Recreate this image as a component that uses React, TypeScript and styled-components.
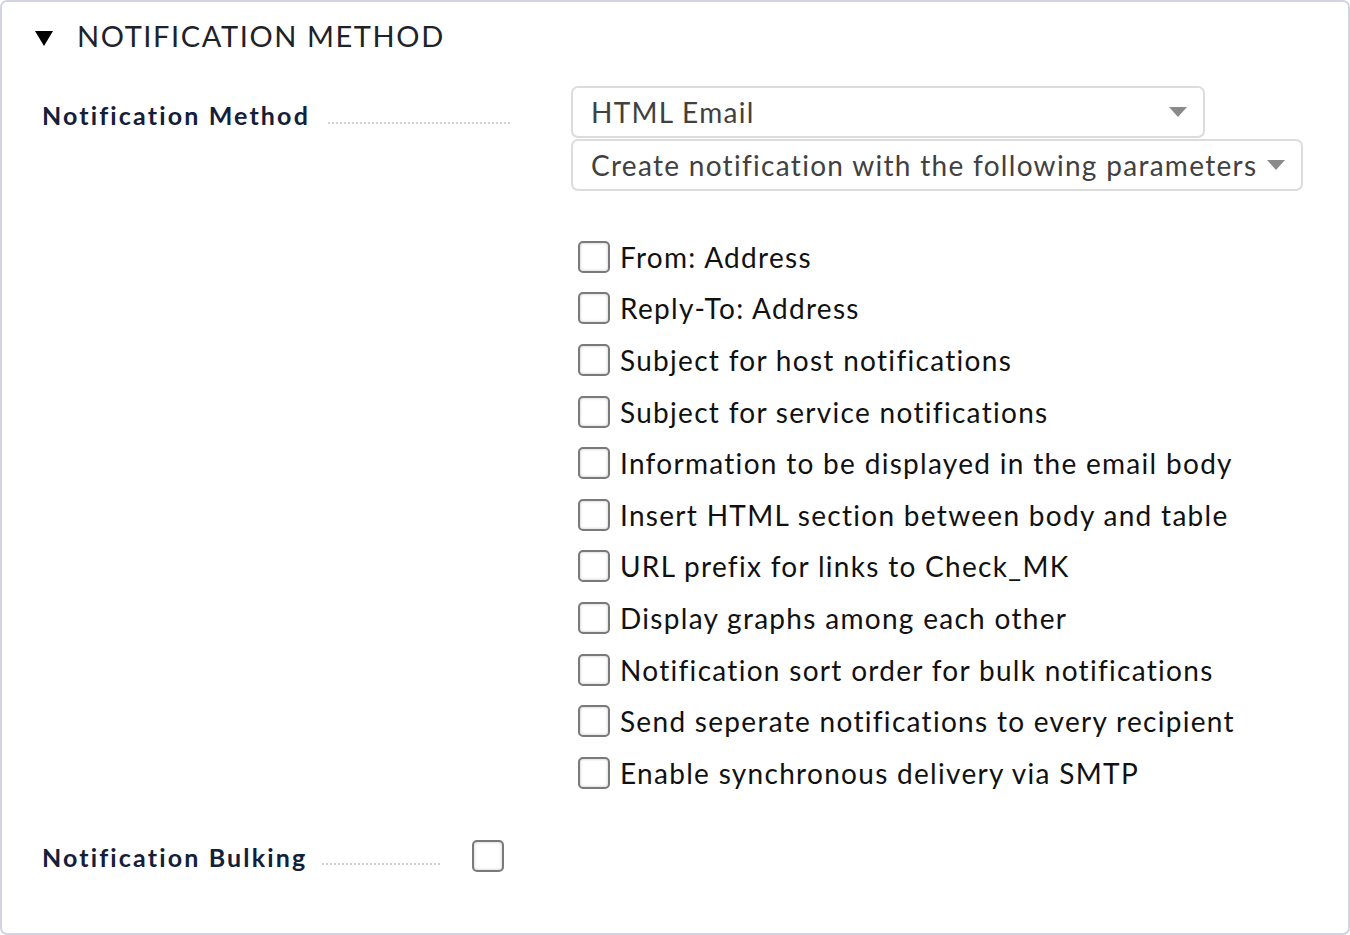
import React from 'react'
import styled, { createGlobalStyle } from 'styled-components'

const GlobalStyle = createGlobalStyle`
  html, body {
    margin: 0;
    padding: 0;
    background: #ffffff;
  }
  body {
    font-family: Lato, 'Open Sans', sans-serif;
  }
`

const Panel = styled.div`
  box-sizing: border-box;
  width: 1350px;
  height: 935px;
  border: 2px solid #d2d4e2;
  border-radius: 7px;
  padding: 15px 0 0 0;
`

const Header = styled.div`
  display: flex;
  align-items: center;
  gap: 24px;
  padding-left: 33px;
  height: 36px;
`

const Triangle = styled.span`
  width: 0;
  height: 0;
  border-left: 9px solid transparent;
  border-right: 9px solid transparent;
  border-top: 15px solid #000;
  margin-top: 6px;
`

const Title = styled.h2`
  margin: 0;
  font-weight: 400;
  font-size: 29px;
  letter-spacing: 1.6px;
  color: #1e2229;
`

const Row = styled.div<{ $gap: number; $top: number }>`
  display: flex;
  align-items: flex-start;
  padding-left: 40px;
  margin-top: ${(p) => p.$top}px;
  gap: ${(p) => p.$gap}px;
`

const Legend = styled.div<{ $height: number; $gap: number; $shift: number }>`
  display: flex;
  align-items: center;
  height: ${(p) => p.$height}px;
  padding-top: ${(p) => p.$shift}px;
  gap: ${(p) => p.$gap}px;
`

const LegendText = styled.span`
  font-weight: 700;
  font-size: 25px;
  letter-spacing: 2.15px;
  color: #13203a;
`

const Dots = styled.span<{ $width: number }>`
  width: ${(p) => p.$width}px;
  height: 2px;
  margin-top: 15px;
  background-image: radial-gradient(circle, #cfcfd6 0.9px, transparent 1.2px);
  background-size: 4px 2px;
  background-repeat: repeat-x;
`

const Value = styled.div`
  display: flex;
  flex-direction: column;
  align-items: flex-start;
`

const Select = styled.div<{ $width: number }>`
  box-sizing: border-box;
  display: flex;
  align-items: center;
  justify-content: space-between;
  width: ${(p) => p.$width}px;
  height: 52px;
  padding: 0 16px 0 18px;
  border: 2px solid #dcdcdc;
  border-radius: 7px;
  background: #fff;
  font-size: 28px;
  letter-spacing: 1.3px;
  color: #414141;
  & + & {
    margin-top: 1px;
  }
`

const Caret = styled.span`
  width: 0;
  height: 0;
  border-left: 9px solid transparent;
  border-right: 9px solid transparent;
  border-top: 10px solid #8a8a8a;
`

const Checklist = styled.div`
  display: flex;
  flex-direction: column;
  margin-top: 40px;
  padding-left: 7px;
`

const CheckRow = styled.label`
  display: flex;
  align-items: center;
  gap: 10px;
  height: 51.6px;
  font-size: 28px;
  letter-spacing: 1.3px;
  color: #111;
`

const Box = styled.span`
  box-sizing: border-box;
  display: inline-block;
  width: 32px;
  height: 32px;
  border: 2px solid #7a7a7a;
  border-radius: 5px;
  background: #fff;
  box-shadow: inset 0 0 3px rgba(0, 0, 0, 0.25);
  flex-shrink: 0;
`

const options = [
  'From: Address',
  'Reply-To: Address',
  'Subject for host notifications',
  'Subject for service notifications',
  'Information to be displayed in the email body',
  'Insert HTML section between body and table',
  'URL prefix for links to Check_MK',
  'Display graphs among each other',
  'Notification sort order for bulk notifications',
  'Send seperate notifications to every recipient',
  'Enable synchronous delivery via SMTP',
]

const App: React.FC = () => {
  return (
    <>
      <GlobalStyle />
      <Panel>
        <Header>
          <Triangle />
          <Title>NOTIFICATION METHOD</Title>
        </Header>
        <Row $gap={61} $top={33}>
          <Legend $height={52} $gap={17} $shift={3}>
            <LegendText>Notification Method</LegendText>
            <Dots $width={183} />
          </Legend>
          <Value>
            <Select $width={634}>
              HTML Email
              <Caret />
            </Select>
            <Select $width={732}>
              Create notification with the following parameters
              <Caret />
            </Select>
            <Checklist>
              {options.map((o) => (
                <CheckRow key={o}>
                  <Box />
                  {o}
                </CheckRow>
              ))}
            </Checklist>
          </Value>
        </Row>
        <Row $gap={31} $top={41}>
          <Legend $height={34} $gap={14} $shift={0}>
            <LegendText>Notification Bulking</LegendText>
            <Dots $width={120} />
          </Legend>
          <Box />
        </Row>
      </Panel>
    </>
  )
}

export default App
